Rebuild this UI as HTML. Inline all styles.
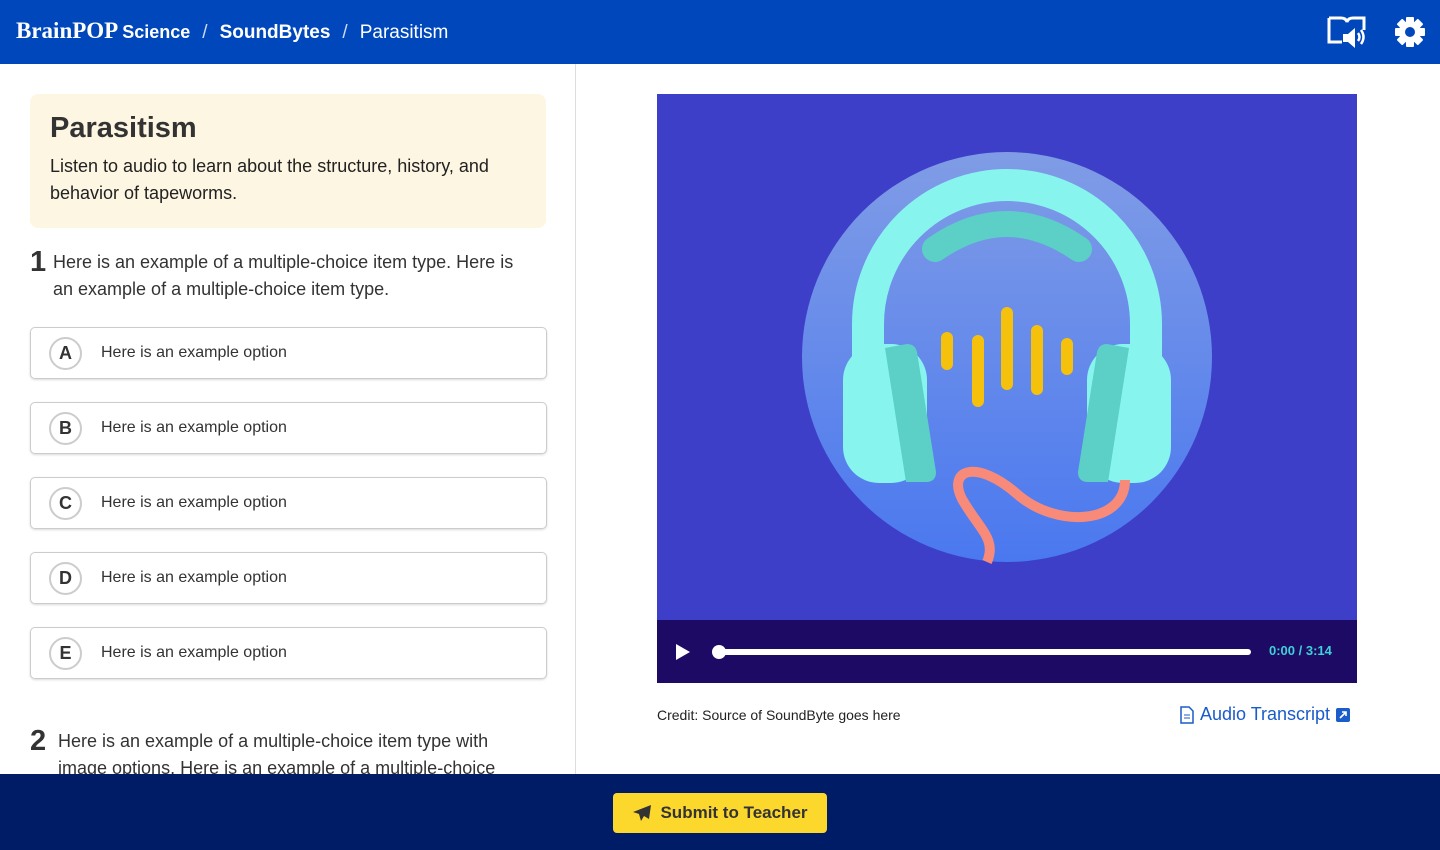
<!DOCTYPE html>
<html><head><meta charset="utf-8"><style>
*{box-sizing:border-box;margin:0;padding:0}
body{width:1440px;height:850px;overflow:hidden;font-family:"Liberation Sans",sans-serif;background:#fff;position:relative;color:#222}
.top{position:absolute;left:0;top:0;width:1440px;height:64px;background:#0047bb;color:#fff}
.crumb{position:absolute;left:16px;top:18px;font-size:19px;display:flex;align-items:baseline;white-space:nowrap}
.left{position:absolute;left:0;top:64px;width:576px;height:710px;border-right:1px solid #ddd;overflow:hidden}
.card{position:absolute;left:30px;top:30px;width:516px;height:134px;background:#fdf6e3;border-radius:8px;padding:18px 20px}
.card h1{font-size:29px;font-weight:bold;color:#333;margin-bottom:8px}
.card p{font-size:18px;line-height:27px;color:#222}
.q{position:absolute;left:30px;font-size:18px;line-height:27px;color:#333}
.q b{position:absolute;left:0;top:0;font-size:29px}
.q span{display:block;margin-left:23px;width:484px}
.opt{position:absolute;left:30px;width:517px;height:52px;border:1px solid #ccc;border-radius:5px;box-shadow:0 1px 2px rgba(0,0,0,.15)}
.opt i{position:absolute;left:18px;top:9px;width:33px;height:33px;border:2px solid #ccc;border-radius:50%;font-style:normal;font-weight:bold;font-size:18px;text-align:center;line-height:29px;color:#333}
.opt span{position:absolute;left:70px;top:16px;font-size:16px;color:#333}
.foot{position:absolute;left:0;top:774px;width:1440px;height:76px;background:#001c66}
.btn{position:absolute;left:613px;top:19px;width:214px;height:40px;background:#fcd82c;border-radius:4px;font-weight:bold;font-size:17px;color:#333;display:flex;align-items:center;justify-content:center;gap:8px}
</style></head><body>
<div class="top">
 <div class="crumb"><span style="font-family:'Liberation Serif',serif;font-weight:bold;font-size:23px">BrainPOP</span><b style="margin-left:4px;font-size:18px">Science</b><span style="margin:0 12px;opacity:.8">/</span><b>SoundBytes</b><span style="margin:0 12px;opacity:.8">/</span><span>Parasitism</span></div>
 <svg style="position:absolute;left:1326px;top:14px" width="42" height="36" viewBox="0 0 42 36"><path d="M3 4h12q5 0 6 4 1-4 6-4h11v12" fill="none" stroke="#fff" stroke-width="3"/><path d="M3 4v24h13" fill="none" stroke="#fff" stroke-width="3"/><path d="M17 20h5l7-6v20l-7-6h-5z" fill="#fff"/><path d="M32 19q3 4 0 8M35 16q5 7 0 14" fill="none" stroke="#fff" stroke-width="2.5"/></svg>
 <svg style="position:absolute;left:1394px;top:16px" width="32" height="32" viewBox="0 0 32 32"><g fill="#fff" transform="translate(16 16)"><circle r="11"/><g id="t"><rect x="-4" y="-15" width="8" height="8" rx="1"/></g><use href="#t" transform="rotate(45)"/><use href="#t" transform="rotate(90)"/><use href="#t" transform="rotate(135)"/><use href="#t" transform="rotate(180)"/><use href="#t" transform="rotate(225)"/><use href="#t" transform="rotate(270)"/><use href="#t" transform="rotate(315)"/></g><circle cx="16" cy="16" r="5" fill="#0047bb"/></svg>
</div>
<div class="left">
 <div class="card"><h1>Parasitism</h1><p>Listen to audio to learn about the structure, history, and behavior of tapeworms.</p></div>
 <div class="q" style="top:185px"><b>1</b><span>Here is an example of a multiple-choice item type. Here is an example of a multiple-choice item type.</span></div>
 <div class="opt" style="top:263px"><i>A</i><span>Here is an example option</span></div>
 <div class="opt" style="top:338px"><i>B</i><span>Here is an example option</span></div>
 <div class="opt" style="top:413px"><i>C</i><span>Here is an example option</span></div>
 <div class="opt" style="top:488px"><i>D</i><span>Here is an example option</span></div>
 <div class="opt" style="top:563px"><i>E</i><span>Here is an example option</span></div>
 <div class="q" style="top:664px"><b>2</b><span style="margin-left:28px;width:470px">Here is an example of a multiple-choice item type with image options. Here is an example of a multiple-choice</span></div>
</div>
<svg style="position:absolute;left:657px;top:94px" width="700" height="526" viewBox="0 0 700 526">
 <defs><linearGradient id="g" x1="0" y1="0" x2="0" y2="1"><stop offset="0" stop-color="#809ce6"/><stop offset="1" stop-color="#4a78ef"/></linearGradient></defs>
 <rect width="700" height="526" fill="#3d3fc8"/>
 <circle cx="350" cy="263" r="205" fill="url(#g)"/>
 <path d="M211 335V230A139 139 0 0 1 489 230V335" fill="none" stroke="#88f4ee" stroke-width="32"/>
 <path d="M278 155Q350 105 422 155" fill="none" stroke="#5ccfc6" stroke-width="26" stroke-linecap="round"/>
 <rect x="186" y="250" width="84" height="139" rx="36" fill="#88f4ee"/>
 <path d="M228 254l22-4q8 0 10 8l19 120q0 10-10 10h-20z" fill="#5ccfc6"/>
 <rect x="430" y="250" width="84" height="139" rx="36" fill="#88f4ee"/>
 <path d="M472 254l-22-4q-8 0-10 8l-19 120q0 10 10 10h20z" fill="#5ccfc6"/>
 <g stroke="#f6c10c" stroke-width="12" stroke-linecap="round"><path d="M290 244v26M321 247v60M350 219v71M380 237v58M410 250v25"/></g>
 <path d="M468 386C468 430 400 435 360 400C320 365 290 375 305 405C322 435 340 445 330 468" fill="none" stroke="#f88a7a" stroke-width="10"/>
</svg>
<div style="position:absolute;left:657px;top:620px;width:700px;height:63px;background:#1d0a64">
 <svg style="position:absolute;left:18px;top:23px" width="16" height="18"><path d="M1 1L15 9L1 17z" fill="#fff"/></svg>
 <div style="position:absolute;left:58px;top:29px;width:536px;height:6px;border-radius:3px;background:#fff"></div>
 <div style="position:absolute;left:55px;top:25px;width:14px;height:14px;border-radius:50%;background:#fff"></div>
 <div style="position:absolute;left:612px;top:23px;font-size:13px;font-weight:bold;color:#3fd0d8">0:00 / 3:14</div>
</div>
<div style="position:absolute;left:657px;top:707px;font-size:14px;color:#222">Credit: Source of SoundByte goes here</div>
<div style="position:absolute;left:1180px;top:704px;font-size:18px;color:#1a5cc8;display:flex;align-items:center;gap:6px">
 <svg width="14" height="18" viewBox="0 0 14 18"><path d="M1 1h8l4 4v12H1z" fill="none" stroke="#1a5cc8" stroke-width="1.5"/><path d="M4 9h6M4 12h6" stroke="#1a5cc8"/></svg>Audio Transcript
 <svg width="14" height="14"><rect width="14" height="14" rx="2" fill="#1a5cc8"/><path d="M4 10L10 4M6 4h4v4" stroke="#fff" stroke-width="1.6" fill="none"/></svg></div>
<div class="foot"><div class="btn"><svg width="20" height="18" viewBox="0 0 20 18"><path d="M19 1L1 8l6 2 2 7 3-5 5 3z" fill="#333"/></svg>Submit to Teacher</div></div>
</body></html>
